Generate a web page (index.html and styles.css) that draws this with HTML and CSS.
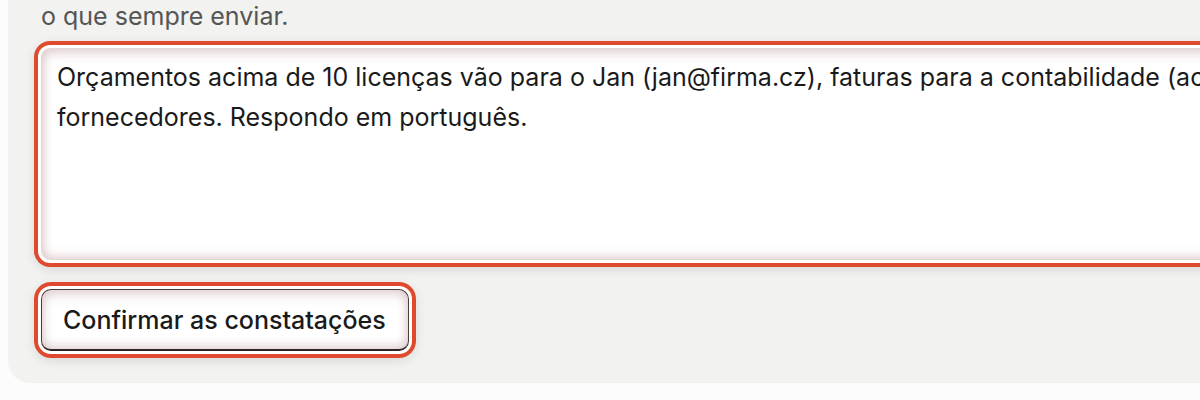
FILE: index.html
```html
<!DOCTYPE html>
<html lang="pt">
<head>
  <meta charset="UTF-8" />
  <meta name="viewport" content="width=device-width, initial-scale=1.0"/>
  <title>Constatações</title>
  <link rel="stylesheet" href="styles.css">
</head>
<body>

  <section class="panel">
    <p class="hint">o que sempre enviar.</p>

    <form class="findings">
      <textarea class="notes" name="notes">Orçamentos acima de 10 licenças vão para o Jan (jan@firma.cz), faturas para a contabilidade (accounting@firma.cz), parcerias para mim e ignoro newsletters de
fornecedores. Respondo em português.</textarea>

      <div class="actions">
        <button type="button" class="confirm">Confirmar as constatações</button>
      </div>
    </form>
  </section>

</body>
</html>
```

FILE: styles.css
```css
:root {
  --ring: #df4a2e;
  --panel: #f2f2f0;
  --text: #1a1a1a;
  --muted: #555555;
}

body {
  margin: 0;
  background: #fcfcfc;
  font-family: Inter, 'Noto Sans', sans-serif;
  overflow: hidden;
}

.panel {
  margin-left: 8px;
  width: 1400px;
  background: var(--panel);
  border-radius: 0 0 0 22px;
  padding: 0 0 32px 33px;
}

.hint {
  margin: 0;
  font-size: 25px;
  line-height: 33px;
  color: var(--muted);
}

.findings {
  display: flex;
  flex-direction: column;
  gap: 29px;
  margin-top: 15px;
}

.notes {
  display: block;
  width: 2200px;
  height: 212px;
  box-sizing: border-box;
  padding: 8px 15px;
  font-family: inherit;
  font-size: 25px;
  line-height: 40px;
  color: var(--text);
  background: #fff;
  border: 1px solid #e2d8d8;
  border-radius: 9px;
  resize: none;
  outline: none;
  box-shadow:
    inset 0 4px 12px rgba(150, 90, 90, 0.28),
    inset 0 -4px 10px rgba(150, 90, 90, 0.18),
    0 0 0 3px #fff,
    0 0 0 7px var(--ring),
    0 3px 12px 6px rgba(0, 0, 0, 0.12);
}

.actions {
  display: flex;
}

.confirm {
  width: 368px;
  height: 62px;
  padding: 0 21px;
  font-family: inherit;
  font-size: 25px;
  font-weight: 500;
  color: var(--text);
  background: #fff;
  border: 1px solid #4a3d3d;
  border-bottom: 2px solid #2e2222;
  border-radius: 10px;
  text-align: left;
  cursor: pointer;
  box-shadow:
    inset 0 4px 12px rgba(150, 90, 90, 0.28),
    inset 0 -4px 10px rgba(150, 90, 90, 0.2),
    0 0 0 3px #fff,
    0 0 0 7px var(--ring),
    0 3px 12px 6px rgba(0, 0, 0, 0.12);
}
```
